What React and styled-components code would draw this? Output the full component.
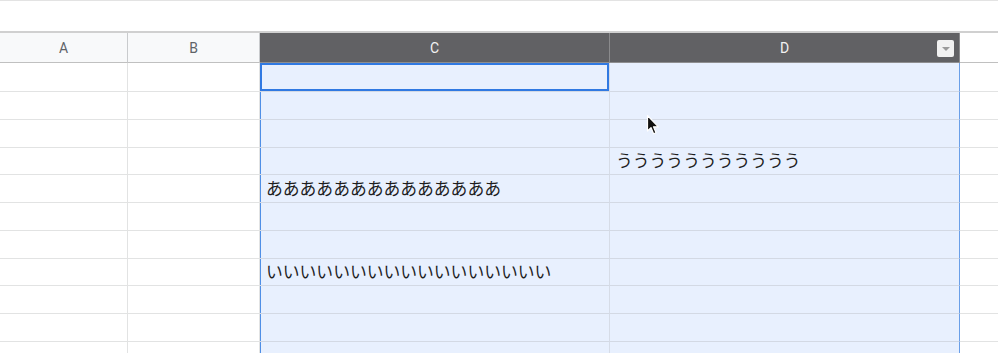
import React from 'react';
import styled, { createGlobalStyle, css } from 'styled-components';

const Global = createGlobalStyle`
  html, body { margin: 0; padding: 0; background: #fff; }
  body { font-family: Roboto, "Liberation Sans", "Noto Sans CJK JP", sans-serif; overflow: hidden; }
`;

const Page = styled.div`
  position: relative;
  width: 998px;
  height: 353px;
  overflow: hidden;
  border-top: 1px solid #e3e3e3;
  box-sizing: border-box;
`;

const Toolbar = styled.div`
  height: 30px;
  border-bottom: 2px solid #d0d0d0;
`;

const Sheet = styled.div`
  display: grid;
  grid-template-columns: 128px 132px 350px 350px 1fr;
`;

const HeadCell = styled.div`
  position: relative;
  box-sizing: border-box;
  height: 30px;
  display: flex;
  align-items: center;
  justify-content: center;
  font-size: 14px;
  color: #5f6368;
  background: #f8f9fa;
  border-right: 1px solid #c9cbcd;
  border-bottom: 1px solid #c0c0c0;
  ${p => p.$selected && css`
    background: #616164;
    color: #f2f2f2;
    border-right-color: #8a8a8c;
    border-bottom-color: #8e8e90;
  `}
  ${p => p.$blank && css`
    background: #fff;
    border-right: none;
  `}
`;

const FilterBtn = styled.div`
  position: absolute;
  right: 5px;
  top: 7px;
  width: 17px;
  height: 17px;
  border-radius: 2px;
  background: #f1f1f1;
  display: flex;
  align-items: center;
  justify-content: center;
  &::after {
    content: '';
    border-left: 4px solid transparent;
    border-right: 4px solid transparent;
    border-top: 4px solid #9a9a9a;
  }
`;

const Cell = styled.div`
  box-sizing: border-box;
  height: ${p => p.$h}px;
  border-right: 1px solid #e2e3e3;
  border-bottom: 1px solid #e2e3e3;
  display: flex;
  align-items: flex-end;
  padding: 0 0 4px 6px;
  font-family: "Noto Sans CJK JP", "Noto Sans", sans-serif;
  font-size: 16.8px;
  line-height: 20px;
  color: #1e1e1e;
  white-space: nowrap;
  ${p => p.$selected && css`
    background: #e8f0fe;
    border-right-color: #d6dce7;
    border-bottom-color: #d3d9e4;
  `}
  ${p => p.$leftEdge && css`box-shadow: inset 1px 0 0 #4f8fe6;`}
  ${p => p.$rightEdge && css`
    border-right: 1px solid #6a9fe8;
  `}
  ${p => p.$active && css`box-shadow: inset 0 0 0 2px #3079e2;`}
  ${p => p.$blank && css`border-right: none;`}
`;

const Pointer = styled.svg`
  position: absolute;
  left: 646px;
  top: 113px;
`;

const rowHeights = [29, 28, 28, 27, 28, 28, 28, 27, 28, 28, 28];

const data = {
  '3-D': 'ううううううううううう',
  '4-C': 'ああああああああああああああ',
  '7-C': 'いいいいいいいいいいいいいいいいい',
};

const cols = ['A', 'B', 'C', 'D', ''];

export default function App() {
  return (
    <Page>
      <Global />
      <Toolbar />
      <Sheet>
        {cols.map(c => (
          <HeadCell key={c || 'e'} $selected={c === 'C' || c === 'D'} $blank={!c}>
            {c}
            {c === 'D' && <FilterBtn />}
          </HeadCell>
        ))}
        {rowHeights.map((h, r) =>
          cols.map(c => (
            <Cell
              key={r + c}
              $h={h}
              $selected={c === 'C' || c === 'D'}
              $leftEdge={c === 'C'}
              $rightEdge={c === 'D'}
              $active={r === 0 && c === 'C'}
              $blank={!c}
            >
              {data[r + '-' + c]}
            </Cell>
          ))
        )}
      </Sheet>
      <Pointer width="14" height="22" viewBox="0 0 14 22">
        <path d="M1.5 1.5 L1.5 17 L5 13.6 L7.6 19.8 L10 18.8 L7.5 12.8 L12.3 12.8 Z" fill="#111" stroke="#fff" strokeWidth="1.2" strokeLinejoin="round" />
      </Pointer>
    </Page>
  );
}
